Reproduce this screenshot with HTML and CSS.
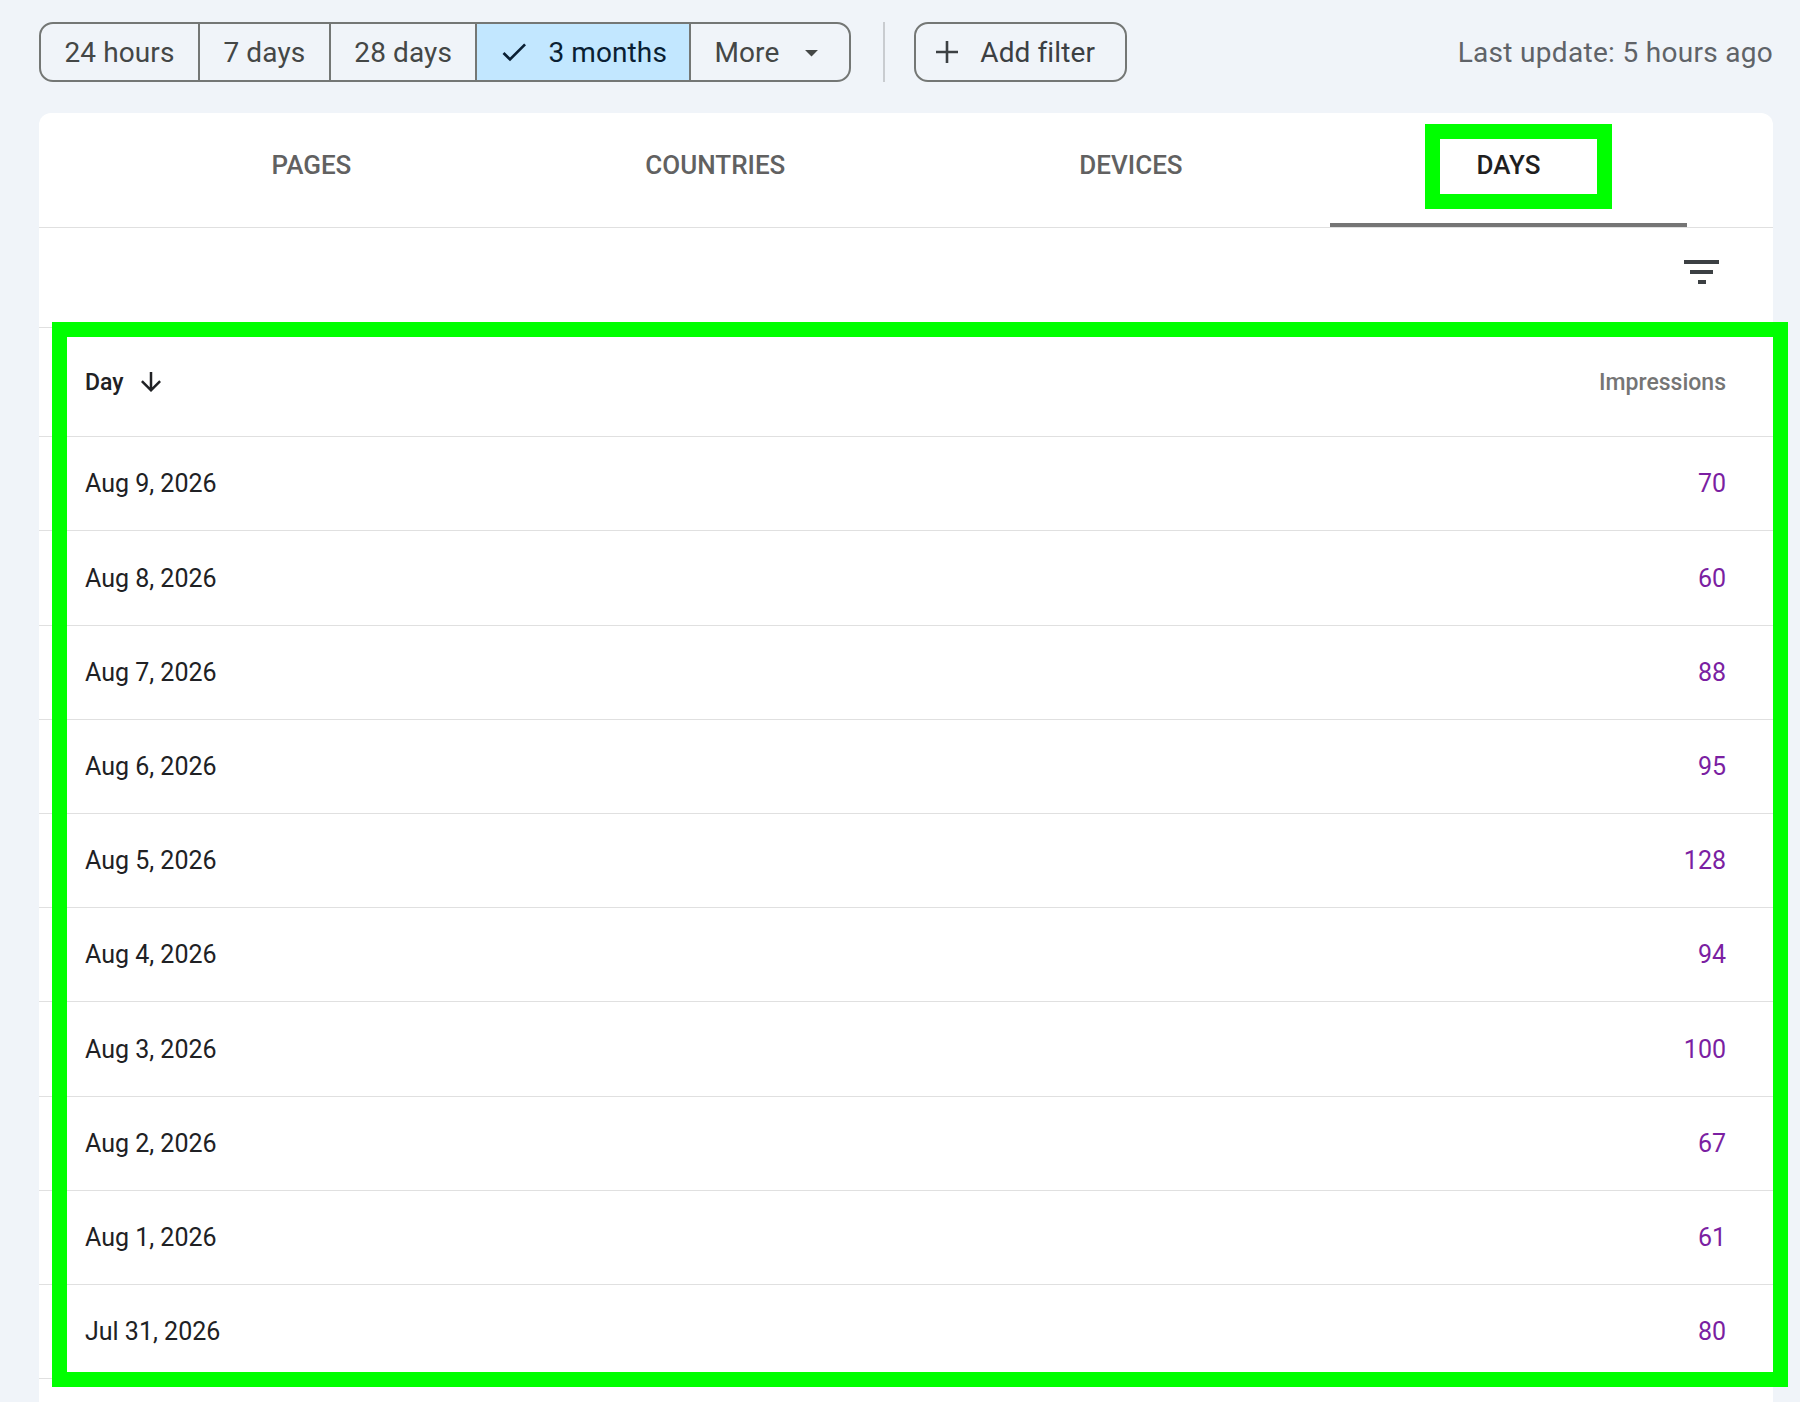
FILE: index.html
```html
<!DOCTYPE html>
<html lang="en">
<head>
<meta charset="utf-8">
<title>Days report</title>
<link rel="stylesheet" href="styles.css">
</head>
<body>
<div class="page">
  <div class="topbar">
    <div class="chips">
      <div class="chip">24 hours</div>
      <div class="chip">7 days</div>
      <div class="chip">28 days</div>
      <div class="chip selected">
        <svg class="ico-check" viewBox="0 0 24 24" width="32" height="32"><path d="M9 16.17L4.83 12l-1.42 1.41L9 19 21 7l-1.41-1.41z"/></svg>
        <span>3 months</span>
      </div>
      <div class="chip more">
        <span>More</span>
        <svg class="ico-drop" viewBox="0 0 24 24" width="31" height="31"><path d="M7 10l5 5 5-5z"/></svg>
      </div>
    </div>
    <div class="vsep"></div>
    <div class="add-filter">
      <svg class="ico-plus" viewBox="0 0 24 24" width="24" height="24"><path d="M12 1v22M1 12h22"/></svg>
      <span>Add filter</span>
    </div>
    <div class="last-update">Last update: 5 hours ago</div>
  </div>

  <div class="card">
    <div class="tabs">
      <div class="tab">PAGES</div>
      <div class="tab">COUNTRIES</div>
      <div class="tab">DEVICES</div>
      <div class="tab active">DAYS</div>
    </div>
    <div class="toolbar">
      <svg class="ico-filter" viewBox="0 0 36 24" width="36" height="24"><rect x="0" y="0" width="35" height="4"/><rect x="6" y="10" width="23" height="4"/><rect x="14" y="20" width="8" height="4"/></svg>
    </div>
    <div class="table">
      <div class="row head">
        <div class="day-h">Day
          <svg class="ico-arrow" viewBox="0 0 24 24" width="30" height="30"><path d="M20 12l-1.41-1.41L13 16.17V4h-2v12.17l-5.58-5.59L4 12l8 8 8-8z"/></svg>
        </div>
        <div class="imp-h">Impressions</div>
      </div>
      <div class="row"><div>Aug 9, 2026</div><div class="num">70</div></div>
      <div class="row"><div>Aug 8, 2026</div><div class="num">60</div></div>
      <div class="row"><div>Aug 7, 2026</div><div class="num">88</div></div>
      <div class="row"><div>Aug 6, 2026</div><div class="num">95</div></div>
      <div class="row"><div>Aug 5, 2026</div><div class="num">128</div></div>
      <div class="row"><div>Aug 4, 2026</div><div class="num">94</div></div>
      <div class="row"><div>Aug 3, 2026</div><div class="num">100</div></div>
      <div class="row"><div>Aug 2, 2026</div><div class="num">67</div></div>
      <div class="row"><div>Aug 1, 2026</div><div class="num">61</div></div>
      <div class="row"><div>Jul 31, 2026</div><div class="num">80</div></div>
    </div>
  </div>

  <div class="hl hl-tab"></div>
  <div class="hl hl-table"></div>
</div>
</body>
</html>
```

FILE: styles.css
```css
* { box-sizing: border-box; }
html, body { margin: 0; padding: 0; }
body {
  background: #f0f4f9;
  font-family: Roboto, "Liberation Sans", Arial, sans-serif;
  overflow: hidden;
}
.page {
  position: relative;
  padding: 22px 27px 0 39px;
}

/* top bar */
.topbar {
  display: flex;
  align-items: center;
  height: 60px;
}
.chips {
  display: flex;
  height: 60px;
  border: 2px solid #747775;
  border-radius: 14px;
  overflow: hidden;
}
.chip {
  display: flex;
  align-items: center;
  padding: 0 23.5px;
  font-size: 28px;
  letter-spacing: 0.1px;
  color: #444746;
  border-left: 2px solid #747775;
  white-space: nowrap;
}
.chip:first-child { border-left: none; }
.chip.selected {
  background: #c2e7ff;
  color: #0a1f33;
  padding-left: 21px;
  padding-right: 22px;
  gap: 18px;
}
.chip.more {
  gap: 17px;
  padding-right: 22px;
}
.ico-check { fill: #0a1f33; }
.ico-drop { fill: #444746; }
.vsep {
  width: 2px;
  height: 60px;
  background: #c9ccd0;
  margin: 0 29px 0 32px;
}
.add-filter {
  display: flex;
  align-items: center;
  height: 60px;
  border: 2px solid #747775;
  border-radius: 14px;
  padding: 0 30px 0 19px;
  gap: 21px;
  font-size: 28px;
  letter-spacing: 0.1px;
  color: #3c4043;
}
.ico-plus { stroke: #3c4043; stroke-width: 2.6; fill: none; }
.last-update {
  margin-left: auto;
  font-size: 28px;
  letter-spacing: 0.3px;
  color: #5f6368;
}

/* card */
.card {
  margin-top: 31px;
  background: #ffffff;
  border-radius: 12px 12px 0 0;
  padding-bottom: 80px;
}
.tabs {
  display: flex;
  justify-content: center;
  border-bottom: 1px solid #e0e0e0;
}
.tab {
  height: 114px;
  padding: 0 147px 7px;
  display: flex;
  align-items: center;
  font-size: 26px;
  font-weight: 500;
  color: #616161;
  border-bottom: 4px solid transparent;
}
.tab.active {
  color: #1f1f1f;
  border-bottom-color: #757575;
}
.toolbar {
  height: 100px;
  border-bottom: 1px solid #e0e0e0;
  display: flex;
  justify-content: flex-end;
  align-items: flex-start;
  padding: 32px 53px 0 0;
}
.ico-filter { fill: #3c4043; }

.row {
  display: flex;
  justify-content: space-between;
  align-items: center;
  height: 94.2px;
  border-bottom: 1px solid #e0e0e0;
  padding: 0 47px 0 46px;
  font-size: 25px;
  color: #202124;
}
.row.head {
  height: 109.3px;
  font-size: 23px;
  font-weight: 500;
}
.day-h {
  display: flex;
  align-items: center;
  gap: 12px;
  color: #202124;
}
.ico-arrow { fill: #202124; }
.imp-h { color: #757575; }
.num { color: #7b1fa2; }

/* annotation highlights */
.hl {
  position: absolute;
  border: 15px solid #00ff00;
}
.hl-tab {
  left: 1425px;
  top: 124px;
  width: 187px;
  height: 85px;
}
.hl-table {
  left: 51.5px;
  top: 321.7px;
  width: 1736.5px;
  height: 1065px;
}
```
